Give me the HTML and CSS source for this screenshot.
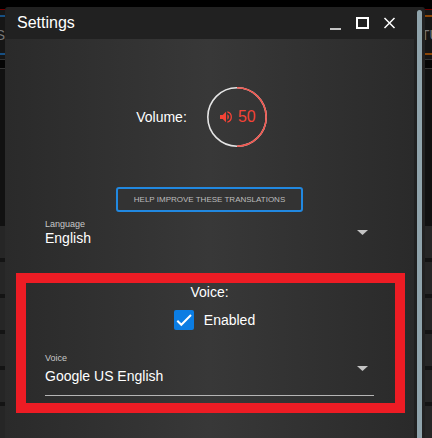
FILE: index.html
```
<!DOCTYPE html>
<html lang="en">
<head>
<meta charset="utf-8">
<title>Settings</title>
<link rel="stylesheet" href="styles.css">
</head>
<body>
<div class="desktop">
  <div class="backdrop backdrop-left"><span class="tab">TS</span></div>
  <section class="window" aria-labelledby="title">
    <div class="dialog">
      <header class="titlebar">
        <h1 id="title">Settings</h1>
        <div class="controls">
          <button type="button" aria-label="Minimize"><svg viewBox="0 0 16 16"><path d="M3 14h11" stroke="#c4c4c4" stroke-width="2"/></svg></button>
          <button type="button" aria-label="Maximize"><svg viewBox="0 0 16 16"><path d="M3 3h11v10H3z" stroke="#fff" stroke-width="2"/></svg></button>
          <button type="button" aria-label="Close"><svg viewBox="0 0 16 16"><path d="M3.500 3l10 10M13.500 3l-10 10" stroke="#fff" stroke-width="1.500"/></svg></button>
        </div>
      </header>
      <main class="content">
        <div class="volume">
          <span>Volume:</span>
          <div class="dial">
            <svg class="ring" viewBox="0 0 60 60"><circle cx="30" cy="30" r="29.200" stroke="#e4e4e4"/><path d="M30 .8a29.200 29.200 0 0 1 0 58.400" stroke="#f2564e"/></svg>
            <svg class="speaker" viewBox="0 0 24 24"><path d="M3 9v6h4l5 5V4L7 9H3zm13.500 3A4.500 4.500 0 0 0 14 7.970v8.050A4.470 4.470 0 0 0 16.500 12zM14 3.230v2.060a7 7 0 0 1 0 13.420v2.060a9 9 0 0 0 0-17.540z"/></svg>
            <span>50</span>
          </div>
        </div>
        <button class="translate" type="button">HELP IMPROVE THESE TRANSLATIONS</button>
        <div class="field language">
          <label for="language">Language</label>
          <select id="language"><option>English</option></select>
        </div>
        <section class="voice">
          <h2>Voice:</h2>
          <label class="enabled"><input type="checkbox" checked><span>Enabled</span></label>
          <div class="field underlined">
            <label for="voice">Voice</label>
            <select id="voice"><option>Google US English</option></select>
          </div>
        </section>
      </main>
    </div>
    <div class="scrollbar"></div>
  </section>
  <div class="backdrop backdrop-right"><span class="tab">TU</span></div>
</div>
</body>
</html>
```
FILE: styles.css
```
* { box-sizing: border-box; }

body {
  margin: 0;
  background: #000;
  color: #fff;
  font: 14px/16px "Liberation Sans", Arial, sans-serif;
}

.desktop {
  display: grid;
  grid-template-columns: 5px minmax(0, 1fr) 7px;
  min-height: 100vh;
}

.backdrop {
  --tab: #174f82;
  display: flex;
  padding-top: 27px;
  overflow: hidden;
  color: #777;
  background:
    linear-gradient(#700000, #700000) 0 9px / 100% 1px no-repeat,
    linear-gradient(var(--tab), var(--tab)) 0 15px / 100% 2px no-repeat,
    linear-gradient(var(--tab), var(--tab)) 0 53px / 100% 2px no-repeat,
    linear-gradient(#343434, #343434) 0 59px / 100% 1px no-repeat,
    linear-gradient(#343434, #343434) 0 68px / 100% 1px no-repeat,
    linear-gradient(#000 9px, #161616 9px 59px, #050505 59px 68px, #111 68px 226px, transparent 226px),
    repeating-linear-gradient(#262626 0 6px, #141414 6px 10px, #262626 10px 36px);
}

.backdrop-left { justify-content: flex-end; }
.backdrop-right { --tab: #8a4507; justify-content: flex-start; }
.backdrop-right .tab { margin-left: -4px; }

.window {
  display: flex;
  margin-top: 7px;
  border-radius: 3px 3px 0 0;
  overflow: hidden;
  background: #212121;
}

.dialog {
  flex: 1;
  min-width: 0;
  display: flex;
  flex-direction: column;
}

.titlebar {
  display: flex;
  align-items: center;
  justify-content: space-between;
  height: 32px;
  padding: 0 17px 0 12px;
}

h1 { margin: 0; font-size: 16px; font-weight: 400; }

.controls { display: flex; gap: 11px; }
.controls button {
  width: 16px;
  height: 16px;
  padding: 0;
  border: 0;
  background: none;
}
svg { display: block; fill: none; }

.content {
  flex: 1;
  padding: 48px 0 25px;
  background: linear-gradient(90deg, #2a2a2a, #383838 50%, #2a2a2a);
}

.volume {
  display: flex;
  align-items: center;
  justify-content: center;
  gap: 20px;
  padding-right: 16px;
  margin-bottom: 40px;
}

.dial {
  display: flex;
  align-items: center;
  justify-content: center;
  gap: 4px;
  position: relative;
  width: 60px;
  height: 60px;
  color: #f44336;
  font-size: 16px;
}
.ring { position: absolute; inset: 0; stroke-width: 1.6; }
.speaker { width: 16px; height: 16px; fill: currentColor; }

.translate {
  display: block;
  height: 25px;
  margin: 0 auto;
  padding: 0 16px;
  border: 2px solid #2188e0;
  border-radius: 3px;
  background: #333;
  color: #bdbdbd;
  font: 8px/16px "Liberation Sans", Arial, sans-serif;
}

.field { position: relative; display: flex; flex-direction: column; }
.field label { color: #c8c8c8; font-size: 9px; line-height: 12px; }
.field select {
  appearance: none;
  width: 100%;
  height: 16px;
  padding: 0;
  border: 0;
  background: none;
  color: #fff;
  font: inherit;
}
.field::after {
  content: "";
  position: absolute;
  right: 6px;
  top: 12px;
  width: 11px;
  height: 5px;
  background: #c4c4c4;
  clip-path: polygon(0 0, 100% 0, 50% 100%);
}

.language { margin: 6px 40px 27px; }

.voice {
  margin: 0 9px 0 11px;
  padding: 1px 21px 7px 19px;
  border: 10px solid #ed1c24;
}
h2 { margin: 0 0 10px; font-size: 14px; font-weight: 400; text-align: center; }

.enabled {
  display: flex;
  align-items: center;
  justify-content: center;
  gap: 10px;
  padding-left: 10px;
  margin-bottom: 22px;
}
.enabled input {
  appearance: none;
  width: 20px;
  height: 20px;
  margin: 0;
  border-radius: 2px;
  background: #0b7de3 url("data:image/svg+xml,%3Csvg xmlns='http://www.w3.org/2000/svg' viewBox='0 0 20 20'%3E%3Cpath d='M3.300 10.800L7.300 14.800L17 5' fill='none' stroke='white' stroke-width='2'/%3E%3C/svg%3E");
}

.underlined { border-bottom: 1px solid #b5b5b5; padding-bottom: 11px; gap: 4px; }
.underlined::after { top: 14px; }

.scrollbar {
  width: 5px;
  margin: 3px 3px 0;
  border-radius: 3px 3px 0 0;
  background: #90a4ac;
}
```
